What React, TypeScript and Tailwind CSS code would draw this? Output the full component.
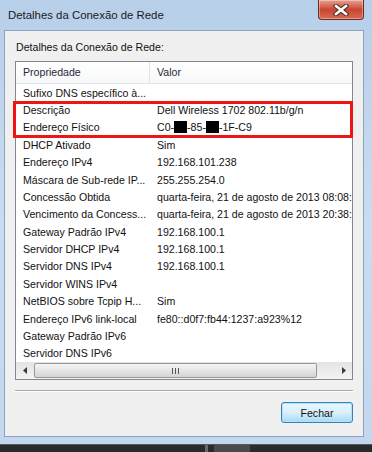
import React from 'react';

const rows: [string, React.ReactNode][] = [
  ['Sufixo DNS específico à...', ''],
  ['Descrição', 'Dell Wireless 1702 802.11b/g/n'],
  ['Endereço Físico', 'mac'],
  ['DHCP Ativado', 'Sim'],
  ['Endereço IPv4', '192.168.101.238'],
  ['Máscara de Sub-rede IP...', '255.255.254.0'],
  ['Concessão Obtida', 'quarta-feira, 21 de agosto de 2013 08:08:'],
  ['Vencimento da Concess...', 'quarta-feira, 21 de agosto de 2013 20:38:'],
  ['Gateway Padrão IPv4', '192.168.100.1'],
  ['Servidor DHCP IPv4', '192.168.100.1'],
  ['Servidor DNS IPv4', '192.168.100.1'],
  ['Servidor WINS IPv4', ''],
  ['NetBIOS sobre Tcpip H...', 'Sim'],
  ['Endereço IPv6 link-local', 'fe80::d0f7:fb44:1237:a923%12'],
  ['Gateway Padrão IPv6', ''],
  ['Servidor DNS IPv6', ''],
];

const Redacted = () => <span className="inline-block w-[13px] h-[12px] bg-black align-[-2px]" />;

const MacValue = () => (
  <span>
    C0-<Redacted />-85-<Redacted />-1F-C9
  </span>
);

const CloseButton = () => (
  <div className="w-[46px] h-[20px] rounded-b-[4px] border border-t-0 border-[#6b2a22] bg-gradient-to-b from-[#e7a093] via-[#c8452f] to-[#d96a52] flex items-center justify-center shadow-[inset_0_0_0_1px_rgba(255,255,255,0.35)]">
    <svg width="16" height="12" viewBox="0 0 16 12">
      <path d="M3 2 L13 10 M13 2 L3 10" stroke="#4a2a26" strokeWidth="4.6" strokeLinecap="square" />
      <path d="M3 2 L13 10 M13 2 L3 10" stroke="#ffffff" strokeWidth="2.6" strokeLinecap="square" />
    </svg>
  </div>
);

const ScrollBar = () => (
  <div className="h-[17px] flex bg-gradient-to-b from-[#e3e3e3] to-[#f4f4f4]">
    <div className="w-[17px] flex items-center justify-center">
      <svg width="4" height="7" viewBox="0 0 4 7"><path d="M4 0 L0 3.5 L4 7 Z" fill="#3b3b3b" /></svg>
    </div>
    <div className="flex-1 flex items-center px-[1px]">
      <div className="h-[15px] w-[283px] rounded-[2px] border border-[#979797] bg-gradient-to-b from-[#f6f6f6] via-[#e6e6e6] to-[#d3d3d3] flex items-center justify-center gap-[2px]">
        <span className="w-px h-[6px] bg-[#555]" />
        <span className="w-px h-[6px] bg-[#555]" />
        <span className="w-px h-[6px] bg-[#555]" />
      </div>
    </div>
    <div className="w-[17px] flex items-center justify-center">
      <svg width="4" height="7" viewBox="0 0 4 7"><path d="M0 0 L4 3.5 L0 7 Z" fill="#3b3b3b" /></svg>
    </div>
  </div>
);

const App: React.FC = () => {
  return (
    <div
      className="relative w-[372px] h-[452px] overflow-hidden bg-[#2a2a2a] flex flex-col text-[#111] text-[10.6px] leading-[14px]"
      style={{ fontFamily: '"Liberation Sans", Arial, sans-serif' }}
    >
      {/* Window frame */}
      <div className="h-[445px] flex flex-col pl-[4px] pr-[8px] pb-[7px] bg-gradient-to-b from-[#b7cfe9] via-[#cadcf1] to-[#c3d7ee] border-b border-[#4d5a6a]">
        <div className="h-[30px] flex justify-between">
          <span className="pl-[4px] pt-[8px] text-[11.4px] text-[#1b1b1b]">Detalhes da Conexão de Rede</span>
          <CloseButton />
        </div>

        <div className="flex-1 flex flex-col bg-[#f0f0f0] border border-[#8da2bb] px-[10px] pt-[8px] pb-[10px]">
          <div className="h-[16px] pl-[1px] leading-[16px]">Detalhes da Conexão de Rede:</div>

          {/* List view */}
          <div className="mt-[6px] h-[319px] border border-[#828790] bg-white flex flex-col">
            <div className="h-[22px] flex items-center border-b border-[#e3e6ea] bg-gradient-to-b from-white to-[#f7f8f9] text-[#1e2838]">
              <div className="w-[134px] pl-[7px] border-r border-[#e0e4ea] h-full flex items-center">Propriedade</div>
              <div className="pl-[7px]">Valor</div>
            </div>
            <div className="flex-1 flex flex-col">
              {rows.map(([k, v]) => (
                <div key={k} className="h-[17.4px] flex items-center whitespace-nowrap">
                  <div className="w-[134px] pl-[7px] overflow-hidden">{k}</div>
                  <div className="flex-1 pl-[7px] overflow-hidden">{v === 'mac' ? <MacValue /> : v}</div>
                </div>
              ))}
            </div>
            <ScrollBar />
          </div>

          <div className="mt-[10px] h-[2px] border-t border-[#a9a9a9] border-b border-b-white" />

          <div className="mt-[10px] flex justify-end">
            <button className="w-[72px] h-[21px] rounded-[3px] border border-[#3c7fb1] bg-gradient-to-b from-[#eaf6fd] via-[#d9f0fc] to-[#a7d9f5] shadow-[inset_0_0_0_1px_#a8e4fb] text-[#111]">
              Fechar
            </button>
          </div>
        </div>
      </div>

      {/* desktop below the window */}
      <div className="flex-1 flex">
        <div className="w-[205px]" />
        <div className="w-[3px] bg-[#6a6a6a]" />
        <div className="w-[6px]" />
        <div className="w-[36px] bg-[#4a4a4a]" />
      </div>

      {/* Red highlight annotation */}
      <div className="absolute left-[13px] top-[101px] w-[340px] h-[37px] border-[3px] border-[#ee1515]" />
    </div>
  );
};

export default App;
